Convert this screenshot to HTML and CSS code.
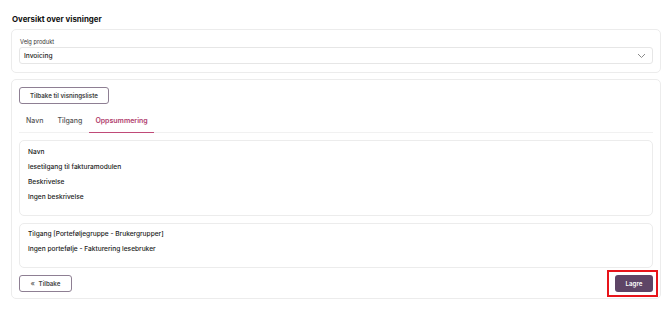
FILE: index.html
```html
<!DOCTYPE html>
<html>
<head>
<meta charset="utf-8">
<link rel="stylesheet" href="styles.css">
</head>
<body>
<div class="page">
  <h1 class="title">Oversikt over visninger</h1>
  <section class="card card-product">
    <label class="field-label">Velg produkt</label>
    <div class="select">
      <span>Invoicing</span>
      <svg class="chev" width="9" height="6" viewBox="0 0 9 6"><path d="M1 1 L4.5 4.5 L8 1" fill="none" stroke="#8a8a8a" stroke-width="1"/></svg>
    </div>
  </section>
  <section class="card card-main">
    <div class="top-row"><button class="btn btn-outline">Tilbake til visningsliste</button></div>
    <nav class="tabs">
      <span class="tab">Navn</span>
      <span class="tab">Tilgang</span>
      <span class="tab active">Oppsummering</span>
    </nav>
    <div class="box box1">
      <p>Navn</p>
      <p>lesetilgang til fakturamodulen</p>
      <p>Beskrivelse</p>
      <p>Ingen beskrivelse</p>
    </div>
    <div class="box box2">
      <p>Tilgang [Porteføljegruppe - Brukergrupper]</p>
      <p>Ingen portefølje - Fakturering lesebruker</p>
    </div>
    <div class="footer">
      <button class="btn btn-outline btn-back"><span class="dbl">&laquo;</span> Tilbake</button>
      <div class="save-wrap">
        <button class="btn btn-primary">Lagre</button>
        <span class="highlight"></span>
      </div>
    </div>
  </section>
</div>
</body>
</html>
```
FILE: styles.css
```css
* { box-sizing: border-box; }
html, body { margin: 0; padding: 0; background: #fff; }
body { font-family: Inter, "Noto Sans", sans-serif; color: #1c1c1c; }
.page { padding: 12px 9px 0 11px; }
.title { margin: 0 0 0 1px; font-size: 7.9px; font-weight: 700; line-height: 14px; height: 17px; color: #111; }
.card { border: 1px solid #ececec; border-radius: 5px; background: #fff; }
.card-product { height: 44px; padding: 8px 7px 0 7px; display: flex; flex-direction: column; }
.field-label { font-size: 5.7px; line-height: 8px; color: #333; margin: 0 0 1px 1px; }
.select { height: 17px; border: 1px solid #e6e6e6; border-radius: 3px; display: flex; align-items: center; justify-content: space-between; padding: 0 6px 0 4px; font-size: 6.6px; font-weight: 500; color: #222; }
.chev { display: block; }
.card-main { margin-top: 6px; height: 220px; padding: 7px 7px 0 7px; display: flex; flex-direction: column; }
.top-row { display: flex; }
.btn { font-family: Inter, "Noto Sans", sans-serif; font-weight: 600; border-radius: 3px; cursor: pointer; }
.btn-outline { background: #fff; border: 1px solid #8e7f93; color: #3d3d3d; font-size: 6.2px; height: 17px; padding: 0 10px; }
.tabs { display: flex; height: 29px; border-bottom: 1px solid #f1f1f1; }
.tab { font-size: 7px; font-weight: 500; color: #555; padding: 10px 7px 0 7px; line-height: 14px; height: 29px; }
.tab.active { color: #b03d6c; font-weight: 600; border-bottom: 1.5px solid #c04a78; padding-left: 6px; padding-right: 6px; }
.box { border: 1px solid #ececec; border-radius: 5px; padding: 3.5px 8px 0 8px; }
.box p { margin: 0; font-size: 6.6px; font-weight: 500; line-height: 15px; color: #222; }
.box1 { margin-top: 7px; height: 76px; }
.box2 { margin-top: 7px; height: 45px; padding-top: 2.5px; }
.footer { display: flex; justify-content: space-between; align-items: flex-start; margin-top: 7px; }
.btn-back { height: 17px; width: 53px; padding: 0; font-size: 6.2px; color: #444; }
.dbl { font-size: 7px; color: #666; margin-right: 2px; }
.save-wrap { position: relative; }
.btn-primary { background: #5e4566; color: #fff; border: none; height: 17px; width: 38px; font-size: 6.2px; padding: 0; display: block; }
.highlight { position: absolute; left: -8px; top: -5px; width: 51px; height: 27px; border: 2px solid #e8141a; pointer-events: none; }
```
